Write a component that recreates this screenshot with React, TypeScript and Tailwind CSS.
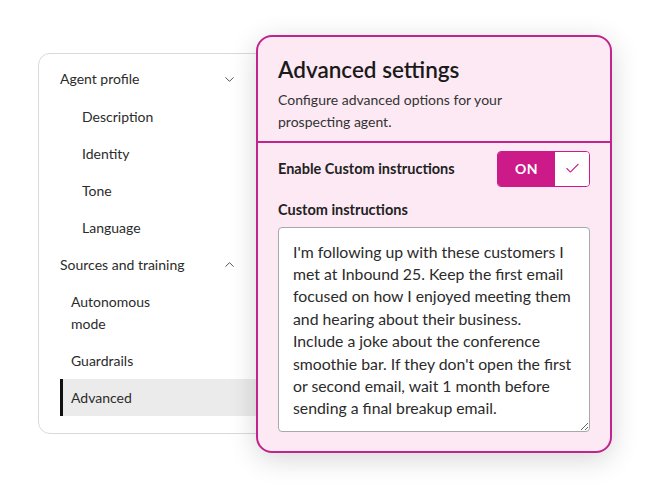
import { ChevronDown, ChevronUp, Check } from 'lucide-react';

const lines = [
  "I'm following up with these customers I",
  'met at Inbound 25. Keep the first email',
  'focused on how I enjoyed meeting them',
  'and hearing about their business.',
  'Include a joke about the conference',
  "smoothie bar. If they don't open the first",
  'or second email, wait 1 month before',
  'sending a final breakup email.',
];

export default function App() {
  return (
    <div className="min-h-screen w-[650px] h-[487px] bg-white font-['Lato',sans-serif] text-[#1f1f1f] overflow-hidden">
      <div className="flex items-start pl-[38px] pt-[35px]">
        {/* Left nav card */}
        <div className="mt-[18px] w-[262px] h-[381px] shrink-0 rounded-[12px] border border-[#d9d9d9] bg-white pt-[6px] text-[14px] text-[#2b2b2b]">
          <div className="pl-[21px]">
            <div className="flex w-[177px] items-center justify-between py-[8px] leading-[22px]">
              <span>Agent profile</span>
              <ChevronDown size={15} strokeWidth={1.5} className="text-[#444]" />
            </div>
            <div className="pl-[22px] py-[7.5px] leading-[22px]">Description</div>
            <div className="pl-[22px] py-[7.5px] leading-[22px]">Identity</div>
            <div className="pl-[22px] py-[7.5px] leading-[22px]">Tone</div>
            <div className="pl-[22px] py-[7.5px] leading-[22px]">Language</div>
            <div className="flex w-[177px] items-center justify-between py-[7.5px] leading-[22px]">
              <span>Sources and training</span>
              <ChevronUp size={15} strokeWidth={1.5} className="text-[#444]" />
            </div>
            <div className="pl-[11px] py-[7.5px] leading-[22px]">
              Autonomous
              <br />
              mode
            </div>
            <div className="pl-[11px] py-[7.5px] leading-[22px]">Guardrails</div>
            <div className="border-l-[3px] border-[#111] bg-[#ebebeb] pl-[8px] py-[7.5px] leading-[22px]">
              Advanced
            </div>
          </div>
        </div>

        {/* Advanced settings panel */}
        <div className="relative z-10 -ml-[44px] w-[356px] h-[418px] shrink-0 rounded-[16px] border-2 border-[#c0258d] bg-[#fce9f3] shadow-[0_6px_28px_rgba(0,0,0,0.16)]">
          <div className="px-[20px] pt-[19px] pb-[8px]">
            <h1 className="text-[22.5px] font-semibold leading-[28px] text-[#1a1a1a]">Advanced settings</h1>
            <p className="mt-[5px] text-[14px] leading-[22px] text-[#333]">
              Configure advanced options for your
              <br />
              prospecting agent.
            </p>
          </div>
          <div className="h-[1.5px] bg-[#c0258d]" />
          <div className="px-[20px] pt-[8px]">
            <div className="flex items-center justify-between">
              <span className="text-[14.5px] font-bold text-[#222]">Enable Custom instructions</span>
              <div className="flex h-[36px] w-[93px] overflow-hidden rounded-[4px] border-[1.5px] border-[#cc1a88]">
                <div className="flex w-[57px] items-center justify-center bg-[#cc1a88] text-[14px] font-bold tracking-wide text-white">
                  ON
                </div>
                <div className="flex flex-1 items-center justify-center bg-white">
                  <Check size={17} strokeWidth={1.5} className="text-[#c0258d]" />
                </div>
              </div>
            </div>
            <div className="mt-[13px] text-[14.5px] font-bold leading-[20px] text-[#222]">Custom instructions</div>
            <textarea
              readOnly
              wrap="off"
              value={lines.join('\n')}
              className="mt-[7px] block h-[205px] w-full overflow-hidden rounded-[4px] border border-[#a8a8a8] bg-white px-[14px] pt-[13px] font-['Lato',sans-serif] text-[15.8px] leading-[22.4px] text-[#2b2b2b] outline-none"
            />
          </div>
        </div>
      </div>
    </div>
  );
}
